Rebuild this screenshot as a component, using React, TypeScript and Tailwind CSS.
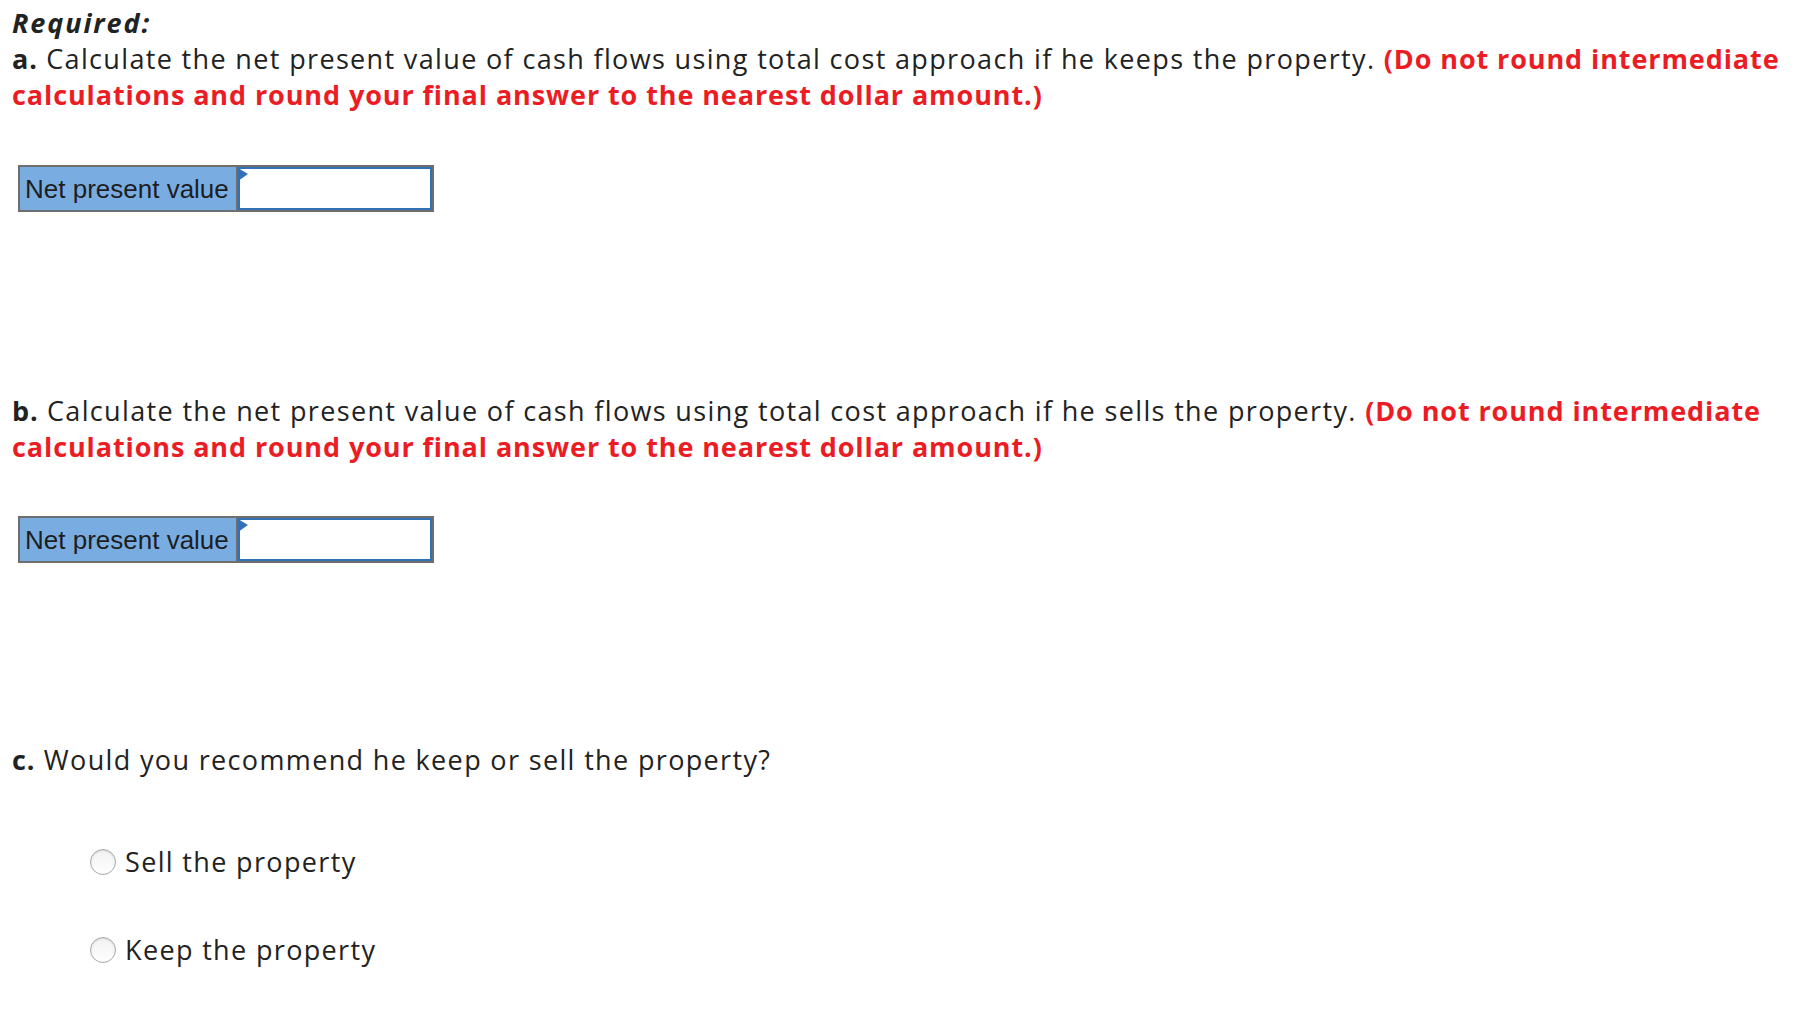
import React from "react";

const red = "font-bold tracking-[0.9px] text-[#ec1c24]";

function NpvTable() {
  return (
    <div className="ml-[6px] flex w-[416px] border-2 border-[#6e6e6e] bg-white tracking-normal">
      <div className="flex h-[43px] w-[218px] items-center border-r-2 border-[#6e6e6e] bg-[#79ade2] pl-[5px] font-['Liberation_Sans',Arial,sans-serif] text-[26px] leading-none text-[#1e1e1e]">
        Net present value
      </div>
      <div className="relative h-[43px] flex-1 border-2 border-[#3170b8] bg-white">
        <svg className="absolute -left-[2px] -top-[1px]" width="10" height="14" viewBox="0 0 10 14">
          <polygon points="0,0 10,6 0,13" fill="#3370b9" />
        </svg>
      </div>
    </div>
  );
}

function Radio({ label }: { label: string }) {
  return (
    <label className="flex items-center gap-[9px]">
      <span className="h-[26px] w-[26px] rounded-full border border-[#a9a9a9] bg-gradient-to-b from-[#f2f2f2] to-white shadow-[inset_0_1px_2px_rgba(0,0,0,0.12)]" />
      <span>{label}</span>
    </label>
  );
}

export default function App() {
  return (
    <div className="min-h-screen bg-white px-[12px] pt-[5px] font-['Open_Sans','Lato',sans-serif] text-[27px] leading-[36px] tracking-[1.35px] text-[#222] [font-variant-ligatures:none]">
      <div className="w-[1800px]">
        <p className="font-bold italic tracking-[1.9px]">Required:</p>
        <p>
          <b className="tracking-[0.9px]">a.</b> Calculate the net present value of cash flows using total cost approach if he keeps the property.{" "}
          <span className={red}>(Do not round intermediate calculations and round your final answer to the nearest dollar amount.)</span>
        </p>
      </div>
      <div className="mt-[52px]">
        <NpvTable />
      </div>

      <p className="mt-[181px] w-[1800px]">
        <b className="tracking-[0.9px]">b.</b> Calculate the net present value of cash flows using total cost approach if he sells the property.{" "}
        <span className={red}>(Do not round intermediate calculations and round your final answer to the nearest dollar amount.)</span>
      </p>
      <div className="mt-[51px]">
        <NpvTable />
      </div>

      <p className="mt-[179px]">
        <b className="tracking-[0.9px]">c.</b> Would you recommend he keep or sell the property?
      </p>

      <div className="mt-[66px] ml-[78px] flex flex-col gap-[52px]">
        <Radio label="Sell the property" />
        <Radio label="Keep the property" />
      </div>
    </div>
  );
}
